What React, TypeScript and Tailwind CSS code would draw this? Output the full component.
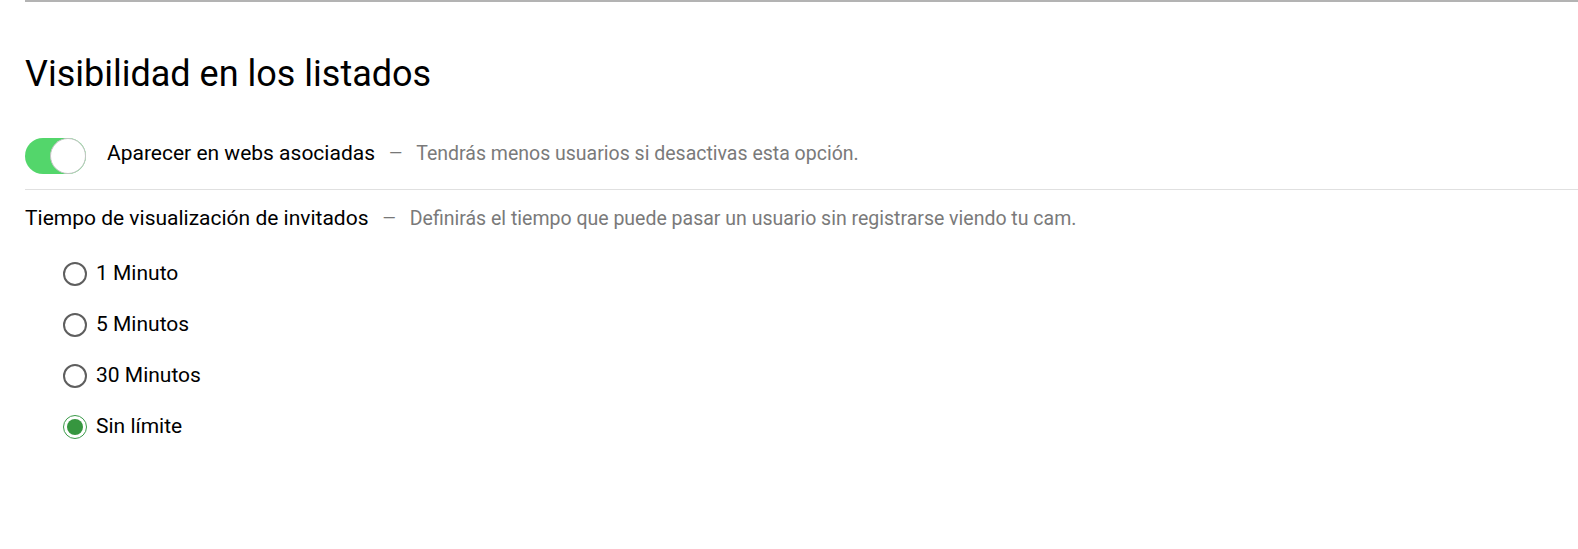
import { FC } from "react"

const options = ["1 Minuto", "5 Minutos", "30 Minutos", "Sin límite"]

const Radio: FC<{ label: string; checked?: boolean }> = ({ label, checked }) => (
    <label className="flex items-center gap-[9px] h-[51px]">
        {checked ? (
            <span className="w-[24px] h-[24px] rounded-full border-[1.5px] border-[#3a9a48] flex items-center justify-center">
                <span className="w-[16px] h-[16px] rounded-full bg-[#36963f]" />
            </span>
        ) : (
            <span className="w-[24px] h-[24px] rounded-full border-2 border-[#5e5e5e]" />
        )}
        <span className="text-[21px] text-black">{label}</span>
    </label>
)

const App: FC = () => {
    return (
        <div className="w-[1578px] h-[549px] bg-white pl-[25px] font-['Roboto',sans-serif] overflow-hidden">
            <div className="h-[2px] bg-[#b3b3b3]" />
            <h2 className="text-[36px] text-black font-normal leading-none mt-[54px] mb-[46px]">Visibilidad en los listados</h2>
            <div className="flex items-center h-[36px]">
                <div className="relative w-[61px] h-[36px] rounded-full bg-[#53d66b]">
                    <span className="absolute right-0 top-0 w-[36px] h-[36px] rounded-full bg-white border border-[#c4c4c4]" />
                </div>
                <span className="ml-[21px] text-[21px] text-black -mt-[4px]">Aparecer en webs asociadas</span>
                <span className="mx-[14px] text-[17px] text-[#777] -mt-[4px]">—</span>
                <span className="text-[19.5px] text-[#7a7a7a] -mt-[4px]">Tendrás menos usuarios si desactivas esta opción.</span>
            </div>
            <div className="h-px bg-[#e0e0e0] mt-[15px]" />
            <div className="flex items-center mt-[13px]">
                <span className="text-[21px] text-black">Tiempo de visualización de invitados</span>
                <span className="mx-[14px] text-[17px] text-[#777]">—</span>
                <span className="text-[19.5px] text-[#7a7a7a]">Definirás el tiempo que puede pasar un usuario sin registrarse viendo tu cam.</span>
            </div>
            <div className="flex flex-col pl-[38px] mt-[14px]">
                {options.map((o) => (
                    <Radio key={o} label={o} checked={o === "Sin límite"} />
                ))}
            </div>
        </div>
    )
}

export default App
